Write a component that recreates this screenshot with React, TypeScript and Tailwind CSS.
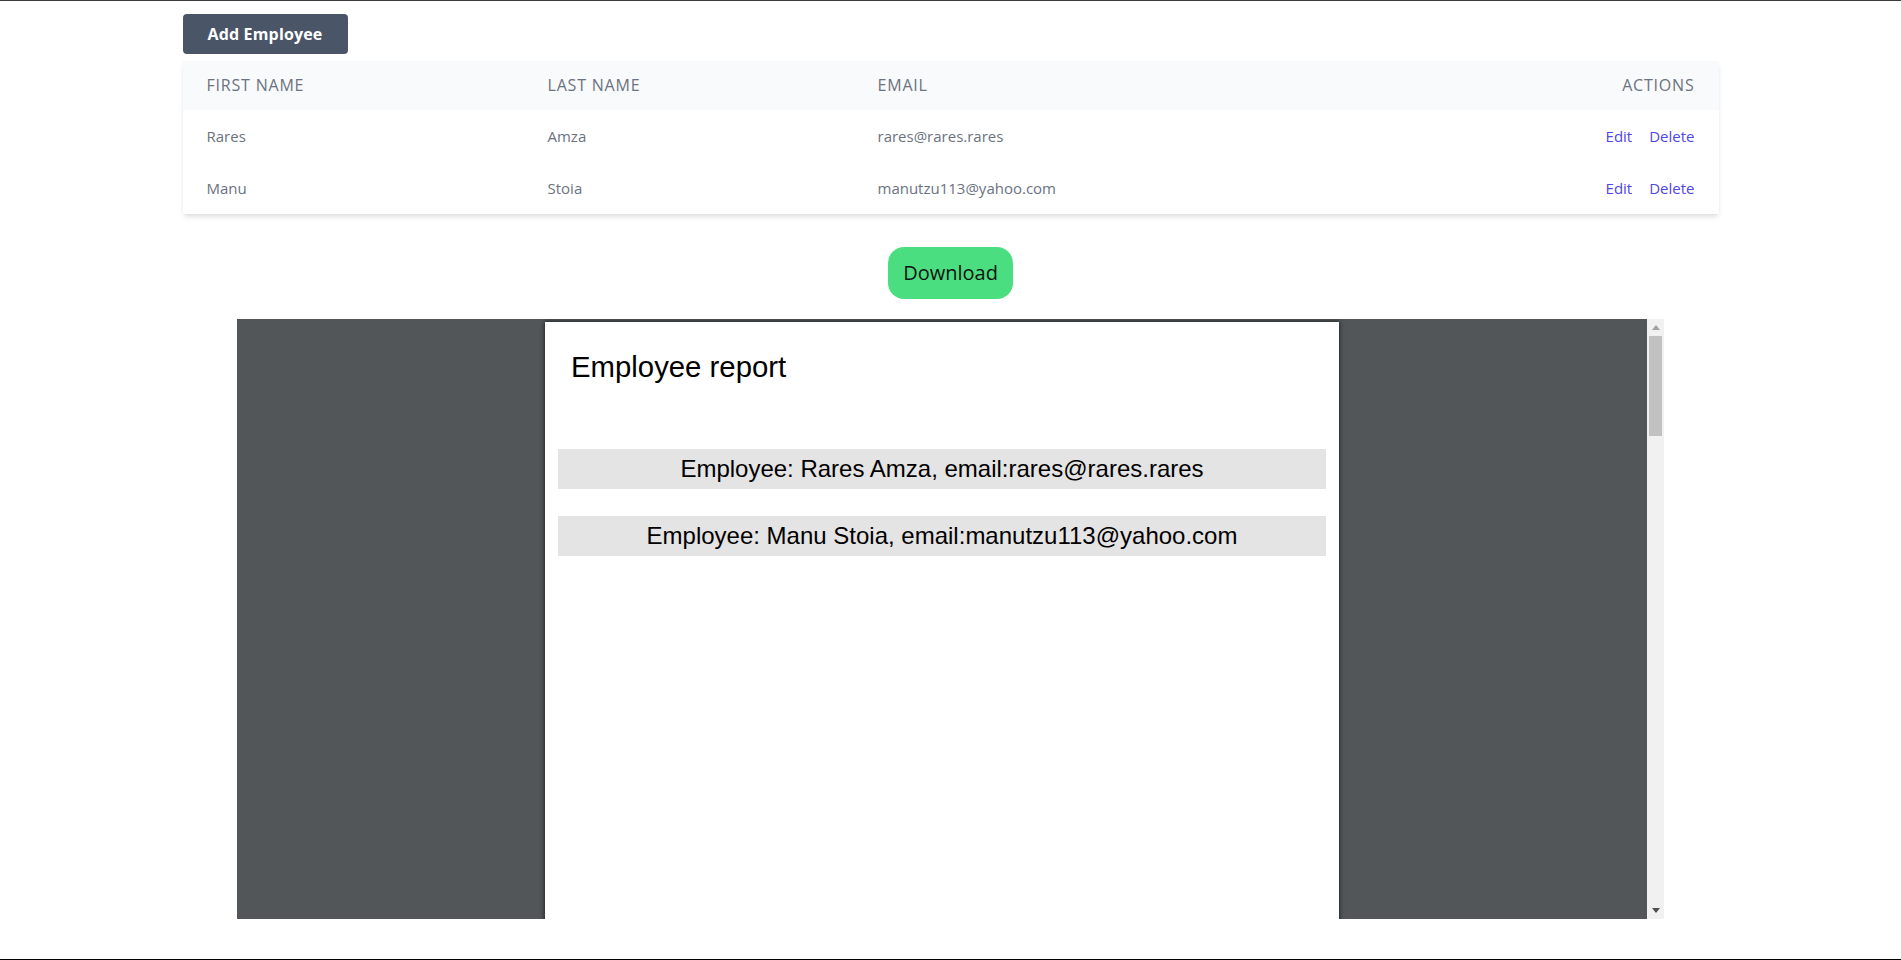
const employees = [
  { first: "Rares", last: "Amza", email: "rares@rares.rares" },
  { first: "Manu", last: "Stoia", email: "manutzu113@yahoo.com" },
];

function ScrollArrow({ up }: { up: boolean }) {
  return (
    <div className="flex h-[17px] items-center justify-center">
      <svg width="8" height="5" viewBox="0 0 8 5">
        {up ? (
          <path d="M0 5 L4 0 L8 5 Z" fill="#a3a3a3" />
        ) : (
          <path d="M0 0 L8 0 L4 5 Z" fill="#505050" />
        )}
      </svg>
    </div>
  );
}

function PdfViewer() {
  return (
    <div className="mx-auto mt-[20px] flex h-[600px] w-[1427px] bg-[#525659]">
      <div className="flex flex-1 justify-center overflow-hidden pt-[3px]">
        <div className="h-[1123px] w-[794px] shrink-0 bg-white font-['Liberation_Sans',Arial,sans-serif] text-black shadow-[0_0_5px_rgba(0,0,0,0.75)]">
          <div className="pl-[26px] pt-[23px] text-[29.33px] leading-normal">Employee report</div>
          <div className="mx-[13px] mt-[60px] flex flex-col gap-[27px]">
            {employees.map((e) => (
              <div key={e.email} className="flex h-[40px] items-center justify-center bg-[#e4e4e4] text-[24px]">
                Employee: {e.first} {e.last}, email:{e.email}
              </div>
            ))}
          </div>
        </div>
      </div>
      <div className="flex w-[17px] flex-col bg-[#f1f1f1]">
        <ScrollArrow up />
        <div className="flex-1 px-[2px]">
          <div className="h-[100px] bg-[#c1c1c1]" />
        </div>
        <ScrollArrow up={false} />
      </div>
    </div>
  );
}

export default function App() {
  return (
    <div className="h-[960px] overflow-hidden border-t border-b border-t-[#3c3c3c] border-b-black bg-white font-['Open_Sans',sans-serif]">
      <div className="container mx-auto pt-[13px]">
        <button className="w-[165px] rounded bg-[#4a5568] py-2 text-base font-bold tracking-[0.01em] text-white">Add Employee</button>
        <div className="mt-[7px] bg-white shadow-md">
          <table className="w-full table-fixed">
            <colgroup>
              <col className="w-[341px]" />
              <col className="w-[330px]" />
              <col className="w-[665px]" />
              <col className="w-[200px]" />
            </colgroup>
            <thead className="bg-gray-50">
              <tr>
                <th className="px-6 py-3.5 text-left text-base leading-[21px] font-medium uppercase tracking-wider text-[#6b7280]">First Name</th>
                <th className="px-6 py-3.5 text-left text-base leading-[21px] font-medium uppercase tracking-wider text-[#6b7280]">Last Name</th>
                <th className="px-6 py-3.5 text-left text-base leading-[21px] font-medium uppercase tracking-wider text-[#6b7280]">Email</th>
                <th className="px-6 py-3.5 text-right text-base leading-[21px] font-medium uppercase tracking-wider text-[#6b7280]">Actions</th>
              </tr>
            </thead>
            <tbody>
              {employees.map((e) => (
                <tr key={e.email}>
                  <td className="px-6 py-4 text-[15px] leading-5 text-[#6b7280]">{e.first}</td>
                  <td className="px-6 py-4 text-[15px] leading-5 text-[#6b7280]">{e.last}</td>
                  <td className="px-6 py-4 text-[15px] leading-5 text-[#6b7280]">{e.email}</td>
                  <td className="px-6 py-4 text-[15px] leading-5 font-medium">
                    <div className="flex justify-end gap-[17px] text-[#4f46e5]">
                      <a href="#">Edit</a>
                      <a href="#">Delete</a>
                    </div>
                  </td>
                </tr>
              ))}
            </tbody>
          </table>
        </div>
      </div>
      <div className="mt-[33px] flex justify-center">
        <button className="h-[52px] w-[125px] rounded-2xl bg-[#4ade80] text-xl text-[#111]">Download</button>
      </div>
      <PdfViewer />
    </div>
  );
}
